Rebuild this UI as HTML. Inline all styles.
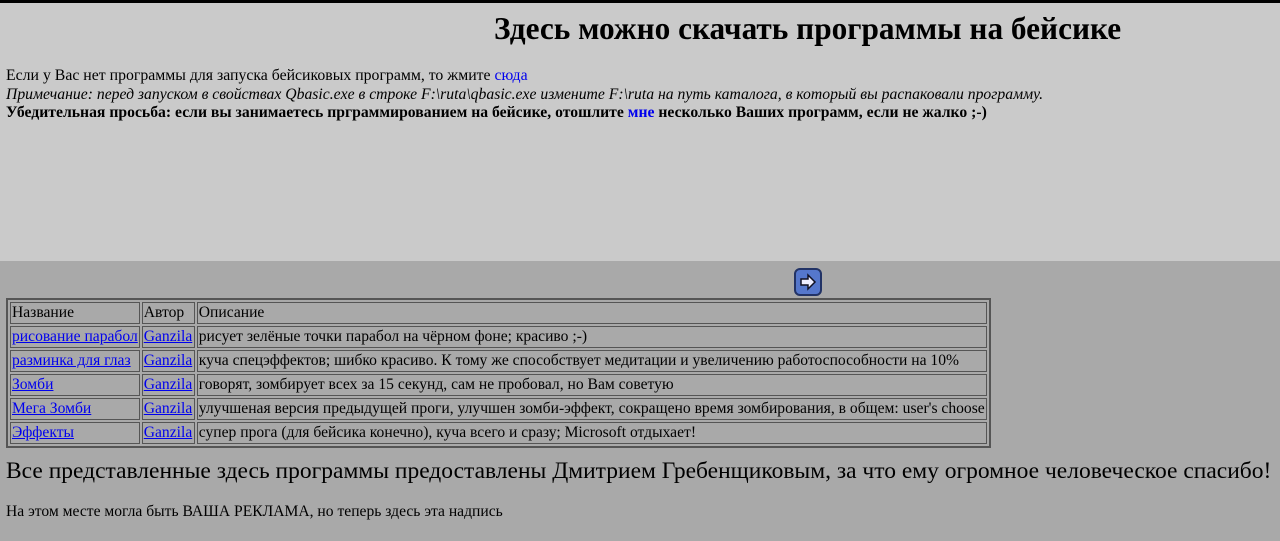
<!DOCTYPE html>
<html><head><meta charset="utf-8"><style>
body{margin:0;width:1280px;height:541px;overflow:hidden;background:#a9a9a9;font-family:"Liberation Serif","Noto Serif CJK SC",serif;color:#000;position:relative}
.top{position:absolute;left:0;top:0;width:1280px;height:261px;background:#cacaca;border-top:3px solid #000;box-sizing:border-box}
.a{position:absolute;white-space:nowrap}
a{color:#00e}
.blue{color:#00e;text-decoration:none}
h1{position:absolute;margin:0;left:494px;top:11px;font-size:31.3px;font-weight:bold;white-space:nowrap}
table{position:absolute;left:6px;top:298px;border:2px solid #555;border-collapse:separate;border-spacing:2px;font-size:15.6px}
td{border:1px solid #555;padding:0 1px;height:20px;white-space:nowrap;line-height:20px}
.btn{position:absolute;left:794px;top:268px;width:28px;height:28px;border-radius:6px;background:#5577cc;border:2px solid #223366;box-sizing:border-box}
</style></head><body>
<div class="top"></div>
<h1>Здесь можно скачать программы на бейсике</h1>
<div class="a" style="left:6px;top:67px;font-size:15.8px">Если у Вас нет программы для запуска бейсиковых программ, то жмите <span class="blue">сюда</span></div>
<div class="a" style="left:6px;top:86px;font-size:15.7px;font-style:italic">Примечание: перед запуском в свойствах Qbasic.exe в строке F:\ruta\qbasic.exe измените F:\ruta на путь каталога, в который вы распаковали программу.</div>
<div class="a" style="left:6px;top:104px;font-size:15.7px;font-weight:bold">Убедительная просьба: если вы занимаетесь прграммированием на бейсике, отошлите <span class="blue">мне</span> несколько Ваших программ, если не жалко ;-)</div>
<div class="btn"><svg width="24" height="24" viewBox="0 0 24 24"><path d="M5 9h7V5l7 7-7 7v-4H5z" fill="#eef" stroke="#112" stroke-width="1.5"/></svg></div>
<table>
<tr><td style="width:124px">Название</td><td style="width:49px">Автор</td><td>Описание</td></tr>
<tr><td><a href="#">рисование парабол</a></td><td><a href="#">Ganzila</a></td><td>рисует зелёные точки парабол на чёрном фоне; красиво ;-)</td></tr>
<tr><td><a href="#">разминка для глаз</a></td><td><a href="#">Ganzila</a></td><td>куча спецэффектов; шибко красиво. К тому же способствует медитации и увеличению работоспособности на 10%</td></tr>
<tr><td><a href="#">Зомби</a></td><td><a href="#">Ganzila</a></td><td>говорят, зомбирует всех за 15 секунд, сам не пробовал, но Вам советую</td></tr>
<tr><td><a href="#">Мега Зомби</a></td><td><a href="#">Ganzila</a></td><td>улучшеная версия предыдущей проги, улучшен зомби-эффект, сокращено время зомбирования, в общем: user's choose</td></tr>
<tr><td><a href="#">Эффекты</a></td><td><a href="#">Ganzila</a></td><td>супер прога (для бейсика конечно), куча всего и сразу; Microsoft отдыхает!</td></tr>
</table>
<div class="a" style="left:6px;top:458px;font-size:23.5px">Все представленные здесь программы предоставлены Дмитрием Гребенщиковым, за что ему огромное человеческое спасибо!</div>
<div class="a" style="left:6px;top:503px;font-size:15.6px">На этом месте могла быть ВАША РЕКЛАМА, но теперь здесь эта надпись</div>
</body></html>
